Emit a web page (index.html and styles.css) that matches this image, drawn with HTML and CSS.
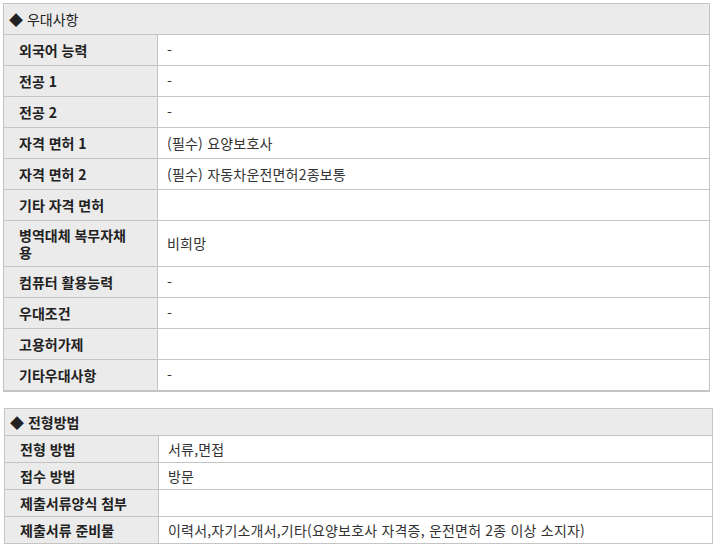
FILE: index.html
```html
<!DOCTYPE html>
<html lang="ko">
<head>
<meta charset="utf-8">
<link rel="stylesheet" href="styles.css">
</head>
<body>
<table class="info info-a">
  <colgroup><col class="c-label"><col></colgroup>
  <tr class="head"><th colspan="2">◆ 우대사항</th></tr>
  <tr><td class="label">외국어 능력</td><td class="val">-</td></tr>
  <tr><td class="label">전공 1</td><td class="val">-</td></tr>
  <tr><td class="label">전공 2</td><td class="val">-</td></tr>
  <tr><td class="label">자격 면허 1</td><td class="val">(필수) 요양보호사</td></tr>
  <tr><td class="label">자격 면허 2</td><td class="val">(필수) 자동차운전면허2종보통</td></tr>
  <tr><td class="label">기타 자격 면허</td><td class="val"></td></tr>
  <tr class="tall"><td class="label">병역대체 복무자채용</td><td class="val">비희망</td></tr>
  <tr><td class="label">컴퓨터 활용능력</td><td class="val">-</td></tr>
  <tr><td class="label">우대조건</td><td class="val">-</td></tr>
  <tr><td class="label">고용허가제</td><td class="val"></td></tr>
  <tr><td class="label">기타우대사항</td><td class="val">-</td></tr>
</table>

<table class="info info-b">
  <colgroup><col class="c-label"><col></colgroup>
  <tr class="head"><th colspan="2">◆ 전형방법</th></tr>
  <tr><td class="label">전형 방법</td><td class="val">서류,면접</td></tr>
  <tr><td class="label">접수 방법</td><td class="val">방문</td></tr>
  <tr><td class="label">제출서류양식 첨부</td><td class="val"></td></tr>
  <tr><td class="label">제출서류 준비물</td><td class="val">이력서,자기소개서,기타(요양보호사 자격증, 운전면허 2종 이상 소지자)</td></tr>
</table>
</body>
</html>
```

FILE: styles.css
```css
html, body {
  margin: 0;
  background: #ffffff;
}
body {
  padding: 3px 0 0 3px;
  font-family: "Noto Sans CJK KR", "Noto Sans", sans-serif;
  font-size: 14px;
  color: #333333;
}
.info {
  border-collapse: collapse;
  table-layout: fixed;
}
.info-a {
  width: 707px;
  border-bottom: 2px solid #c4c4c4;
}
.info-b {
  width: 709px;
  margin: 16px 0 0 1px;
}
.c-label {
  width: 154px;
}
.info th,
.info td {
  border: 1px solid #c4c4c4;
  padding: 0;
  line-height: 17px;
  vertical-align: middle;
}
.head th {
  background: #ebebeb;
  text-align: left;
  padding-left: 5px;
  font-weight: normal;
  color: #222222;
}
.info-b .head th {
  font-weight: bold;
}
.info-a td,
.info-a th {
  height: 30px;
}
.info-a .tall td {
  height: 45px;
}
.info-b td,
.info-b th {
  height: 26px;
}
.label {
  background: #ebebeb;
  font-weight: bold;
  color: #222222;
  padding: 0 24px 0 15px !important;
}
.val {
  padding-left: 9px !important;
  color: #333333;
  letter-spacing: 0.2px;
}
```
